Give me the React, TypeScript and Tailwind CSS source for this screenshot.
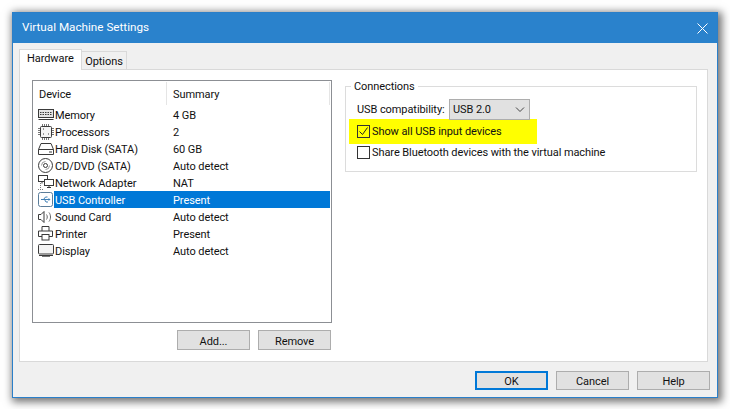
import React from 'react';

const ink = "#3a3a3a";

const Memory = () => (
  <svg width="16" height="12" viewBox="0 0 16 12" fill="none" stroke={ink}>
    <rect x="0.500" y="0.500" width="15" height="8" fill="#e4e4e4" />
    <path d="M2 3.500h12M2 5.500h12" strokeDasharray="1.500 1" />
    <path d="M0.500 10.500h15" />
  </svg>
);
const Cpu = () => (
  <svg width="16" height="16" viewBox="0 0 16 16" fill="none" stroke={ink}>
    <rect x="2.500" y="2.500" width="11" height="11" rx="1" fill="#f4f4f4" />
    <path d="M4.500 0v2M6.500 0v2M8.500 0v2M10.500 0v2M4.500 14v2M6.500 14v2M8.500 14v2M10.500 14v2M0 4.500h2M0 6.500h2M0 8.500h2M0 10.500h2M14 4.500h2M14 6.500h2M14 8.500h2M14 10.500h2" stroke="#777" />
    <path d="M5 5h1M10 10h1M5 10h1" />
  </svg>
);
const Disk = () => (
  <svg width="16" height="12" viewBox="0 0 16 12" fill="none" stroke={ink}>
    <path d="M3 0.500h10l2.500 6v5h-15v-5z" />
    <path d="M0.500 6.500h15" />
    <path d="M11 9h3" />
  </svg>
);
const Cd = () => (
  <svg width="15" height="15" viewBox="0 0 15 15" fill="none" stroke={ink}>
    <circle cx="7.500" cy="7.500" r="7" />
    <circle cx="7.500" cy="7.500" r="2" />
    <path d="M3.500 7.500a4 4 0 0 1 4-4" stroke="#999" />
    <path d="M11.500 7.500a4 4 0 0 1-4 4" stroke="#999" />
  </svg>
);
const Network = () => (
  <svg width="16" height="15" viewBox="0 0 16 15" fill="none" stroke={ink}>
    <rect x="0.500" y="0.500" width="9" height="6" />
    <rect x="6.500" y="4.500" width="9" height="6" fill="#fff" />
    <path d="M11 10.500v2M9 12.500h4M4 6.500v2" />
    <path d="M0 14.500h6M2.500 8v6" strokeDasharray="1 1" stroke="#777" />
  </svg>
);
const Usb = () => (
  <svg width="15" height="15" viewBox="0 0 15 15" fill="none">
    <rect x="0.500" y="0.500" width="14" height="14" rx="2" fill="#fff" stroke="#5b7d9a" />
    <path d="M3 7.500h8M5.500 7.500l2-2.500h2M6.500 7.500l1.500 2.500h2" stroke="#3f7fb5" />
    <path d="M10.500 6l2 1.500-2 1.500z" fill="#3f7fb5" />
  </svg>
);
const Speaker = () => (
  <svg width="14" height="12" viewBox="0 0 14 12" fill="none" stroke={ink}>
    <path d="M0.500 3.500h2.500l3-3v11l-3-3h-2.500z" />
    <path d="M8.500 3.500c1 1.500 1 3.500 0 5M11 1.500c2 2.500 2 6.500 0 9" stroke="#666" />
  </svg>
);
const Printer = () => (
  <svg width="15" height="15" viewBox="0 0 15 15" fill="none" stroke={ink}>
    <path d="M4 5V0.500h7V5" />
    <path d="M4 10.500h-3.500v-5.500h14v5.500h-3.500" />
    <rect x="4" y="8.500" width="7" height="5.500" />
  </svg>
);
const Display = () => (
  <svg width="16" height="13" viewBox="0 0 16 13" fill="none" stroke={ink}>
    <rect x="0.500" y="0.500" width="15" height="9.500" rx="1" fill="#f4f4f4" />
    <path d="M1 11.500h14" />
    <path d="M4 12.500h8" stroke="#777" />
  </svg>
);

const devices = [
  { name: "Memory", summary: "4 GB", icon: Memory },
  { name: "Processors", summary: "2", icon: Cpu },
  { name: "Hard Disk (SATA)", summary: "60 GB", icon: Disk },
  { name: "CD/DVD (SATA)", summary: "Auto detect", icon: Cd },
  { name: "Network Adapter", summary: "NAT", icon: Network },
  { name: "USB Controller", summary: "Present", icon: Usb, selected: true },
  { name: "Sound Card", summary: "Auto detect", icon: Speaker },
  { name: "Printer", summary: "Present", icon: Printer },
  { name: "Display", summary: "Auto detect", icon: Display },
];

const Btn = ({ children, primary, tall }: { children: React.ReactNode; primary?: boolean; tall?: boolean }) => (
  <button className={`w-[73px] ${tall ? 'h-[20px]' : 'h-[19px]'} pt-[2px] bg-[#e1e1e1] flex items-center justify-center leading-none ${primary ? 'border-2 border-[#0078d7]' : 'border border-[#adadad]'}`}>
    {children}
  </button>
);

export default function App() {
  return (
    <div className="w-[730px] h-[409px] bg-white pt-[12px] pl-[12px] overflow-hidden text-[11px] tracking-[-0.08px] text-[#111] font-['Roboto',sans-serif]">
      <div className="w-[706px] h-[386px] flex flex-col bg-[#f0f0f0] border border-[#2a7fc9] shadow-[2px_2px_8px_2px_rgba(0,0,0,0.55)]">
        <div className="h-[30px] shrink-0 bg-[#2a82cc] flex items-center justify-between px-[9px] text-white text-[11.700px] tracking-normal">
          <span>Virtual Machine Settings</span>
          <svg width="11" height="11" viewBox="0 0 11 11" stroke="#fff" fill="none">
            <path d="M0.500 0.500l10 10M10.500 0.500l-10 10" />
          </svg>
        </div>

        <div className="flex pl-[6px] pt-[6px] h-[27px] shrink-0">
          <div className="h-[21px] w-[63px] bg-white border border-[#d9d9d9] border-b-0 pl-[7px] leading-[17px] relative z-10">Hardware</div>
          <div className="h-[19px] mt-[2px] pt-[2px] w-[45px] bg-[#f0f0f0] border border-[#d9d9d9] border-l-0 border-b-0 flex items-center justify-center">Options</div>
        </div>

        <div className="w-[689px] h-[293px] ml-[6px] -mt-px bg-white border border-[#d9d9d9] flex pt-[10px] pl-[12px]">
          <div className="w-[300px] shrink-0">
            <div className="h-[243px] border border-[#8c8f94]">
              <div className="flex h-[24px] pt-px">
                <div className="w-[134px] border-r border-[#e5e5e5] pl-[6px] pt-[5px] leading-[16px]">Device</div>
                <div className="flex-1 pl-[6px] pt-[5px] leading-[16px] border-r border-[#e5e5e5] mr-px">Summary</div>
              </div>
              <div className="pt-[1px]">
                {devices.map((d) => (
                  <div key={d.name} className="flex h-[17px] items-center">
                    <div className="w-[21px] shrink-0 pl-[5px] flex items-center justify-start">
                      <d.icon />
                    </div>
                    <div className={`flex flex-1 h-full pt-[2px] items-center leading-none mr-px ${d.selected ? 'bg-[#0078d7] text-white' : ''}`}>
                      <span className="w-[119px] pl-px">{d.name}</span>
                      <span>{d.summary}</span>
                    </div>
                  </div>
                ))}
              </div>
            </div>
            <div className="flex justify-end gap-[8px] mt-[7px] pr-px">
              <Btn tall>Add...</Btn>
              <Btn tall>Remove</Btn>
            </div>
          </div>

          <div className="w-[352px] h-[86px] ml-[13px] mt-[6px] border border-[#dcdcdc] relative pl-[11px] pt-[12px]">
            <span className="absolute left-[5px] -top-[7px] bg-white px-[3px] leading-[14px]">Connections</span>
            <div className="flex items-center h-[21px]">
              <span className="w-[92px] whitespace-nowrap pt-[2px]">USB compatibility:</span>
              <div className="w-[81px] h-[21px] bg-[#e1e1e1] border border-[#adadad] flex items-center justify-between pl-[3px] pr-[4px]">
                <span className="pt-[2px]">USB 2.0</span>
                <svg width="10" height="6" viewBox="0 0 10 6" fill="none" stroke="#444">
                  <path d="M1 0.500l4 4 4-4" />
                </svg>
              </div>
            </div>
            <div className="flex items-center h-[25px] w-[188px] -ml-[8px] bg-[#ffff00] pl-[8px] -mt-px">
              <span className="w-[13px] h-[13px] border border-[#333] flex items-center justify-center mr-[2px]">
                <svg width="11" height="11" viewBox="0 0 11 11" fill="none" stroke="#222">
                  <path d="M1.500 5.500l3 3 5-7" />
                </svg>
              </span>
              <span className="pt-[2px]">Show all USB input devices</span>
            </div>
            <div className="flex items-center h-[16px]">
              <span className="w-[13px] h-[13px] border border-[#333] bg-white mr-[2px]" />
              <span className="pt-[2px]">Share Bluetooth devices with the virtual machine</span>
            </div>
          </div>
        </div>

        <div className="flex justify-end gap-[8px] mt-[9px] pr-[7px]">
          <Btn primary>OK</Btn>
          <Btn>Cancel</Btn>
          <Btn>Help</Btn>
        </div>
      </div>
    </div>
  );
}
